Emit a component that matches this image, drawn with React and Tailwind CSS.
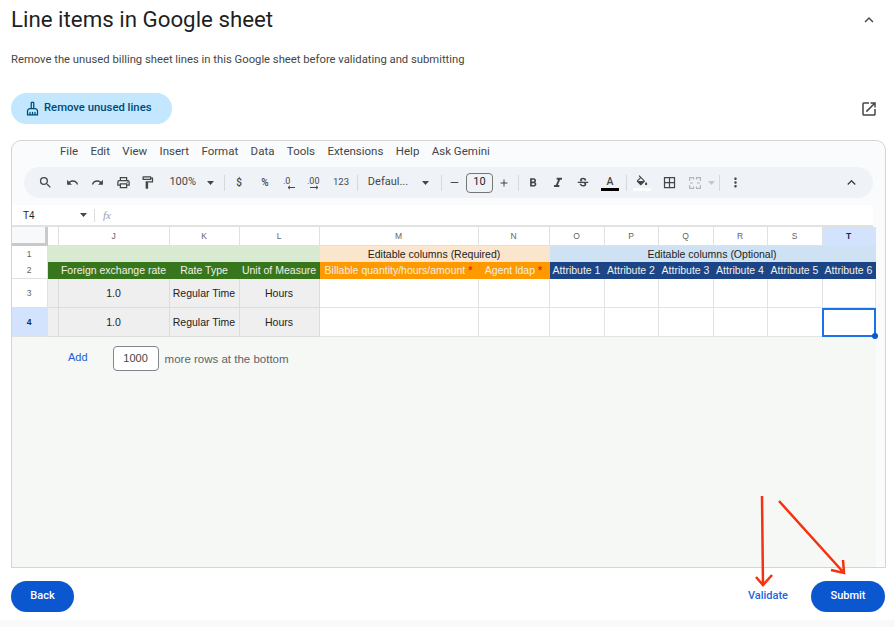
import React from 'react';
import {
  MdOutlineCleaningServices,
  MdOutlineOpenInNew,
  MdSearch,
  MdUndo,
  MdRedo,
  MdOutlinePrint,
  MdOutlineFormatPaint,
  MdFormatBold,
  MdFormatItalic,
  MdStrikethroughS,
  MdBorderAll,
  MdMoreVert,
  MdExpandLess,
  MdRemove,
  MdAdd,
} from 'react-icons/md';

const menus = ['File', 'Edit', 'View', 'Insert', 'Format', 'Data', 'Tools', 'Extensions', 'Help', 'Ask Gemini'];
const columns = ['J', 'K', 'L', 'M', 'N', 'O', 'P', 'Q', 'R', 'S', 'T'];
const attributes = ['Attribute 1', 'Attribute 2', 'Attribute 3', 'Attribute 4', 'Attribute 5', 'Attribute 6'];
const gridCols = 'grid grid-cols-[36px_11px_111px_70px_80px_159px_71px_55px_54px_55px_54px_55px_53px]';

const Caret = ({ muted }) => (
  <svg width="7" height="4" viewBox="0 0 7 4" className="shrink-0">
    <path d="M0 0h7L3.5 4z" fill={muted ? '#c4c7c5' : '#444746'} />
  </svg>
);

const Sep = ({ className }) => (
  <div className={`flex justify-center ${className}`}>
    <div className="w-px h-[16px] bg-[#d5d9dd]" />
  </div>
);

const Slot = ({ className, children }) => (
  <div className={`flex items-center justify-center shrink-0 ${className}`}>{children}</div>
);

const HeaderCell = ({ children, selected }) => (
  <div
    className={`flex items-center justify-center pr-[1px] border-r border-b border-[#dfe1e3] text-[8.5px] ${
      selected ? 'bg-[#d3e3fd] text-[#0b2f5f] font-bold' : 'bg-white text-[#5f6368]'
    }`}
  >
    {children}
  </div>
);

const RowNum = ({ children, selected }) => (
  <div
    className={`flex items-center justify-center pr-[1px] pt-[1px] border-r border-b border-[#dfe1e3] text-[8.5px] ${
      selected ? 'bg-[#d3e3fd] text-[#0b2f5f] font-bold' : 'bg-white text-[#5f6368]'
    }`}
  >
    {children}
  </div>
);

const DarkCell = ({ children, className }) => (
  <div className={`flex items-center justify-center pr-[2px] pt-[1px] whitespace-nowrap overflow-hidden text-[10.5px] text-[#f0f0e8] ${className}`}>
    {children}
  </div>
);

const GrayCell = ({ children }) => (
  <div className="flex items-center justify-center pr-[1px] pt-[1px] whitespace-nowrap bg-[#efefef] border-r border-b border-[#dcdcdc] text-[10.5px] text-[#222]">
    {children}
  </div>
);

const EmptyCell = () => <div className="bg-white border-r border-b border-[#e2e3e3]" />;

const DataRow = ({ num, selected }) => (
  <div className={`${gridCols} h-[29px]`}>
    <RowNum selected={selected}>{num}</RowNum>
    <GrayCell />
    <GrayCell>1.0</GrayCell>
    <GrayCell>Regular Time</GrayCell>
    <GrayCell>Hours</GrayCell>
    <EmptyCell />
    <EmptyCell />
    <EmptyCell />
    <EmptyCell />
    <EmptyCell />
    <EmptyCell />
    <EmptyCell />
    {selected ? (
      <div className="relative -ml-[1px] bg-white border-2 border-[#1a73e8]">
        <div className="absolute -right-[4px] -bottom-[4px] w-[6px] h-[6px] rounded-full bg-[#0b57d0]" />
      </div>
    ) : (
      <EmptyCell />
    )}
  </div>
);

const Toolbar = () => (
  <div className="flex items-center h-[31px] mx-[12px] mt-[5px] pl-[9px] rounded-full bg-[#eff3f8] text-[#444746] text-[11px]">
    <Slot className="w-[24px]"><MdSearch size={15} /></Slot>
    <Slot className="w-[30px]"><MdUndo size={13} /></Slot>
    <Slot className="w-[20px]"><MdRedo size={13} /></Slot>
    <Slot className="w-[32px]"><MdOutlinePrint size={15} /></Slot>
    <Slot className="w-[16px]"><MdOutlineFormatPaint size={15} /></Slot>
    <Slot className="w-[44px] justify-end pr-[3px]">100%</Slot>
    <Slot className="w-[22px]"><Caret /></Slot>
    <Sep className="w-[6px]" />
    <Slot className="w-[24px] text-[10px] font-medium">$</Slot>
    <Slot className="w-[28px] text-[10px] font-medium">%</Slot>
    <Slot className="w-[22px]">
      <svg width="14" height="14" viewBox="0 0 14 14" fill="none" stroke="#444746">
        <path d="M5 11.5h7M5 11.5l2-1.7M5 11.5l2 1.7" strokeWidth="1" />
        <text x="0" y="8" fontSize="9" fill="#444746" stroke="none" fontFamily="Roboto">.0</text>
      </svg>
    </Slot>
    <Slot className="w-[28px]">
      <svg width="16" height="14" viewBox="0 0 16 14" fill="none" stroke="#444746">
        <path d="M3 11.5h8M11 11.5l-2-1.7M11 11.5l-2 1.7" strokeWidth="1" />
        <text x="0" y="8" fontSize="9" fill="#444746" stroke="none" fontFamily="Roboto">.00</text>
      </svg>
    </Slot>
    <Slot className="w-[24px] text-[9.5px]">123</Slot>
    <Sep className="w-[8px]" />
    <Slot className="w-[54px]">Defaul...</Slot>
    <Slot className="w-[20px]"><Caret /></Slot>
    <Sep className="w-[12px]" />
    <Slot className="w-[14px]"><MdRemove size={13} /></Slot>
    <Slot className="w-[37px]">
      <div className="w-[27px] h-[20px] flex items-center justify-center border border-[#747775] rounded-[4px] text-[#1f1f1f]">10</div>
    </Slot>
    <Slot className="w-[12px]"><MdAdd size={14} /></Slot>
    <Sep className="w-[16px]" />
    <Slot className="w-[14px]"><MdFormatBold size={16} /></Slot>
    <Slot className="w-[36px]"><MdFormatItalic size={16} /></Slot>
    <Slot className="w-[14px]"><MdStrikethroughS size={16} /></Slot>
    <Slot className="w-[28px] ml-[6px]">
      <div className="flex flex-col items-center">
        <span className="text-[10.5px] leading-[13px] font-medium">A</span>
        <div className="w-[18px] h-[3px] bg-black" />
      </div>
    </Slot>
    <Sep className="w-[4px]" />
    <Slot className="w-[28px]">
      <div className="flex flex-col items-center gap-[2px]">
        <svg width="14" height="11" viewBox="0 0 24 18" fill="#444746">
          <path d="M16.56 8.94L7.62 0 6.21 1.41l2.38 2.38-5.15 5.15c-.59.59-.59 1.54 0 2.12l5.5 5.5c.29.29.68.44 1.06.44s.77-.15 1.06-.44l5.5-5.5c.59-.58.59-1.53 0-2.12zM5.21 10L10 5.21 14.79 10H5.21zM19 11.5s-2 2.17-2 3.5c0 1.1.9 2 2 2s2-.9 2-2c0-1.33-2-3.5-2-3.5z" />
        </svg>
        <div className="w-[18px] h-[3px] bg-white" />
      </div>
    </Slot>
    <Slot className="w-[26px]"><MdBorderAll size={15} /></Slot>
    <Slot className="w-[26px]">
      <svg width="12" height="12" viewBox="0 0 12 12" fill="none" stroke="#b4b7b9" strokeWidth="1.2">
        <path d="M0.6 4V0.6H4.5V2.5M0.6 8v3.4h3.9V9.5M7.5 2.5V0.6h3.9V4M7.5 9.5v1.9h3.9V8M1 6h3M8 6h3" />
      </svg>
    </Slot>
    <Slot className="w-[6px]"><Caret muted /></Slot>
    <Sep className="w-[10px]" />
    <Slot className="w-[22px]"><MdMoreVert size={15} /></Slot>
    <Slot className="w-[24px] ml-auto mr-[10px]"><MdExpandLess size={17} /></Slot>
  </div>
);

const Sheet = () => (
  <div className="flex flex-col h-[428px] ml-[11px] mr-[9px] border border-[#d3d6d6] rounded-t-[10px] bg-[#f9fbfd] overflow-hidden font-['Liberation_Sans',sans-serif]">
    <div className="flex items-center gap-[12.4px] h-[21px] pl-[48px] text-[11.5px] text-[#444746] font-['Roboto',sans-serif]">
      {menus.map((m) => <span key={m}>{m}</span>)}
    </div>
    <div className="font-['Roboto',sans-serif]">
      <Toolbar />
    </div>
    <div className="flex items-center h-[22px] mt-[7px] mr-[12px] bg-white border-b-2 border-[#e1e3e1] text-[10px] text-[#1f1f1f]">
      <span className="ml-[11px] w-[57px]">T4</span>
      <Caret />
      <div className="w-px h-[13px] ml-[7px] bg-[#dadce0]" />
      <span className="ml-[8px] text-[11px] italic text-[#9aa0a6] font-['Liberation_Serif',serif]">fx</span>
    </div>
    <div className="flex flex-col w-[864px]">
      <div className={`${gridCols} h-[19px]`}>
        <div className="bg-[#f8f9fa] border-r-[3px] border-b-[3px] border-[#c7c9cb]" />
        <div className="bg-white border-r border-b border-[#dfe1e3]" />
        {columns.map((c) => <HeaderCell key={c} selected={c === 'T'}>{c}</HeaderCell>)}
      </div>
      <div className={`${gridCols} h-[16px]`}>
        <RowNum>1</RowNum>
        <div className="col-span-4 bg-[#d9ead3]" />
        <div className="col-span-2 flex items-center justify-center pr-[2px] pt-[1px] bg-[#fce5cd] text-[10.5px] text-[#222]">Editable columns (Required)</div>
        <div className="col-span-6 flex items-center justify-center pr-[2px] pt-[1px] bg-[#cfe2f3] text-[10.5px] text-[#222]">Editable columns (Optional)</div>
      </div>
      <div className={`${gridCols} h-[17px]`}>
        <RowNum>2</RowNum>
        <DarkCell className="bg-[#38761d]" />
        <DarkCell className="bg-[#38761d]">Foreign exchange rate</DarkCell>
        <DarkCell className="bg-[#38761d]">Rate Type</DarkCell>
        <DarkCell className="bg-[#38761d]">Unit of Measure</DarkCell>
        <DarkCell className="bg-[#ff9900]">Billable quantity/hours/amount <span className="ml-[3px] font-bold text-[#f0280c]">*</span></DarkCell>
        <DarkCell className="bg-[#ff9900]">Agent ldap <span className="ml-[3px] font-bold text-[#f0280c]">*</span></DarkCell>
        {attributes.map((a) => <DarkCell key={a} className="bg-[#1c4587]">{a}</DarkCell>)}
      </div>
      <DataRow num={3} />
      <DataRow num={4} selected />
    </div>
    <div className="flex-1 w-[864px] bg-[#f6f8f6] flex items-start pt-[9px]">
      <span className="ml-[56px] mt-[3px] text-[11px] text-[#1a5fd0] font-medium">Add</span>
      <div className="ml-[25px] w-[46px] h-[25px] flex items-center justify-center bg-white border border-[#80868b] rounded-[4px] text-[11px] text-[#444746]">1000</div>
      <span className="ml-[6px] mt-[5px] text-[11.5px] text-[#5f6368]">more rows at the bottom</span>
    </div>
  </div>
);

const Arrows = () => (
  <svg className="absolute inset-0 pointer-events-none" width="895" height="627" fill="none" stroke="#f4320f" strokeWidth="2.5">
    <path d="M762 496L763 585M756 577L763 585L772 575" />
    <path d="M779 501L844 573M831 570L844 573L843 560" />
  </svg>
);

export default function App() {
  return (
    <div className="relative flex flex-col w-[895px] h-[627px] bg-white overflow-hidden font-['Roboto',sans-serif]">
      <div className="flex items-center justify-between h-[40px] pl-[11px] pr-[17px]">
        <h1 className="text-[22.3px] text-[#1f1f1f]">Line items in Google sheet</h1>
        <MdExpandLess size={18} className="text-[#444746]" />
      </div>
      <p className="mt-[12px] ml-[11px] text-[11.25px] leading-[16px] text-[#444746]">
        Remove the unused billing sheet lines in this Google sheet before validating and submitting
      </p>
      <div className="flex items-center justify-between mt-[25px] pl-[11px] pr-[17px]">
        <button className="flex items-center gap-[4px] w-[161px] h-[31px] pl-[14px] rounded-full bg-[#c2e7ff] text-[11.3px] font-medium text-[#004a77]">
          <MdOutlineCleaningServices size={15} />
          Remove unused lines
        </button>
        <MdOutlineOpenInNew size={18} className="text-[#444746]" />
      </div>
      <div className="mt-[16px]">
        <Sheet />
      </div>
      <div className="flex items-center mt-[13px] px-[10px] ml-[1px] text-[11px] font-medium">
        <button className="w-[63px] h-[31px] rounded-full bg-[#0b57d0] text-white">Back</button>
        <button className="ml-auto text-[#1f66d8]">Validate</button>
        <button className="w-[74px] h-[31px] ml-[23px] rounded-full bg-[#0b57d0] text-white">Submit</button>
      </div>
      <div className="mt-auto h-[7px] bg-[#f8f9fa]" />
      <Arrows />
    </div>
  );
}
